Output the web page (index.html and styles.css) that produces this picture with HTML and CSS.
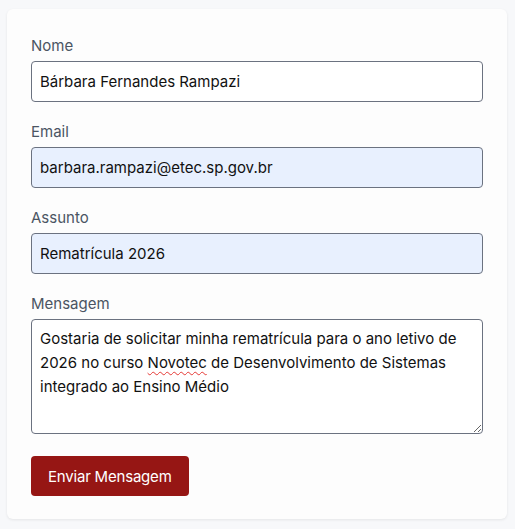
FILE: index.html
```html
<!DOCTYPE html>
<html lang="pt-BR">
<head>
<meta charset="utf-8">
<title>Contato</title>
<link rel="stylesheet" href="styles.css">
</head>
<body>
<form class="card">
  <div class="field">
    <label class="label" for="nome">Nome</label>
    <input class="input" id="nome" type="text" value="Bárbara Fernandes Rampazi">
  </div>
  <div class="field">
    <label class="label" for="email">Email</label>
    <input class="input input-filled" id="email" type="text" value="barbara.rampazi@etec.sp.gov.br">
  </div>
  <div class="field">
    <label class="label" for="assunto">Assunto</label>
    <input class="input input-filled" id="assunto" type="text" value="Rematrícula 2026">
  </div>
  <div class="field">
    <span class="label">Mensagem</span>
    <div class="textarea">
      <div class="line">Gostaria de solicitar minha rematrícula para o ano letivo de</div>
      <div class="line"><span>2026 no curso</span> <span class="misspelled">Novotec</span> <span>de Desenvolvimento de Sistemas</span></div>
      <div class="line">integrado ao Ensino Médio</div>
    </div>
  </div>
  <button class="button" type="button">Enviar Mensagem</button>
</form>
</body>
</html>
```
FILE: styles.css
```css
* { box-sizing: border-box; }
html, body { margin: 0; }
body {
  background: #f7f8fa;
  padding: 9px 8px 10px 7px;
  font-family: "Inter", "Open Sans", sans-serif;
  font-size: 15px;
  color: #111;
}
.card {
  width: 500px;
  background: #fdfdfd;
  border-radius: 6px;
  box-shadow: 0 1px 3px rgba(0,0,0,0.08);
  padding: 27px 24px 23px;
  display: flex;
  flex-direction: column;
}
.field {
  display: flex;
  flex-direction: column;
  margin-bottom: 20px;
}
.label {
  display: block;
  color: #4b5563;
  font-size: 15px;
  line-height: 20px;
  margin-bottom: 5px;
}
.input {
  height: 41px;
  border: 1px solid #6b7280;
  border-radius: 4px;
  padding: 0 8px;
  font: inherit;
  color: #111;
  background: #fff;
  outline: none;
}
.input-filled { background: #e8f0fe; }
.textarea {
  height: 115px;
  border: 1px solid #6b7280;
  border-radius: 4px;
  padding: 7px 8px;
  line-height: 24px;
  background: #fff;
  overflow: auto;
  resize: vertical;
}
.line { white-space: nowrap; }
.misspelled {
  text-decoration: underline wavy #e53935;
  text-decoration-thickness: 1px;
  text-underline-offset: 3px;
}
.button {
  align-self: flex-start;
  height: 40px;
  margin-top: 2px;
  border: none;
  border-radius: 4px;
  background: #961614;
  color: #fff;
  font: inherit;
  font-size: 15px;
  letter-spacing: -0.2px;
  white-space: nowrap;
  padding: 0 17px;
}
```
